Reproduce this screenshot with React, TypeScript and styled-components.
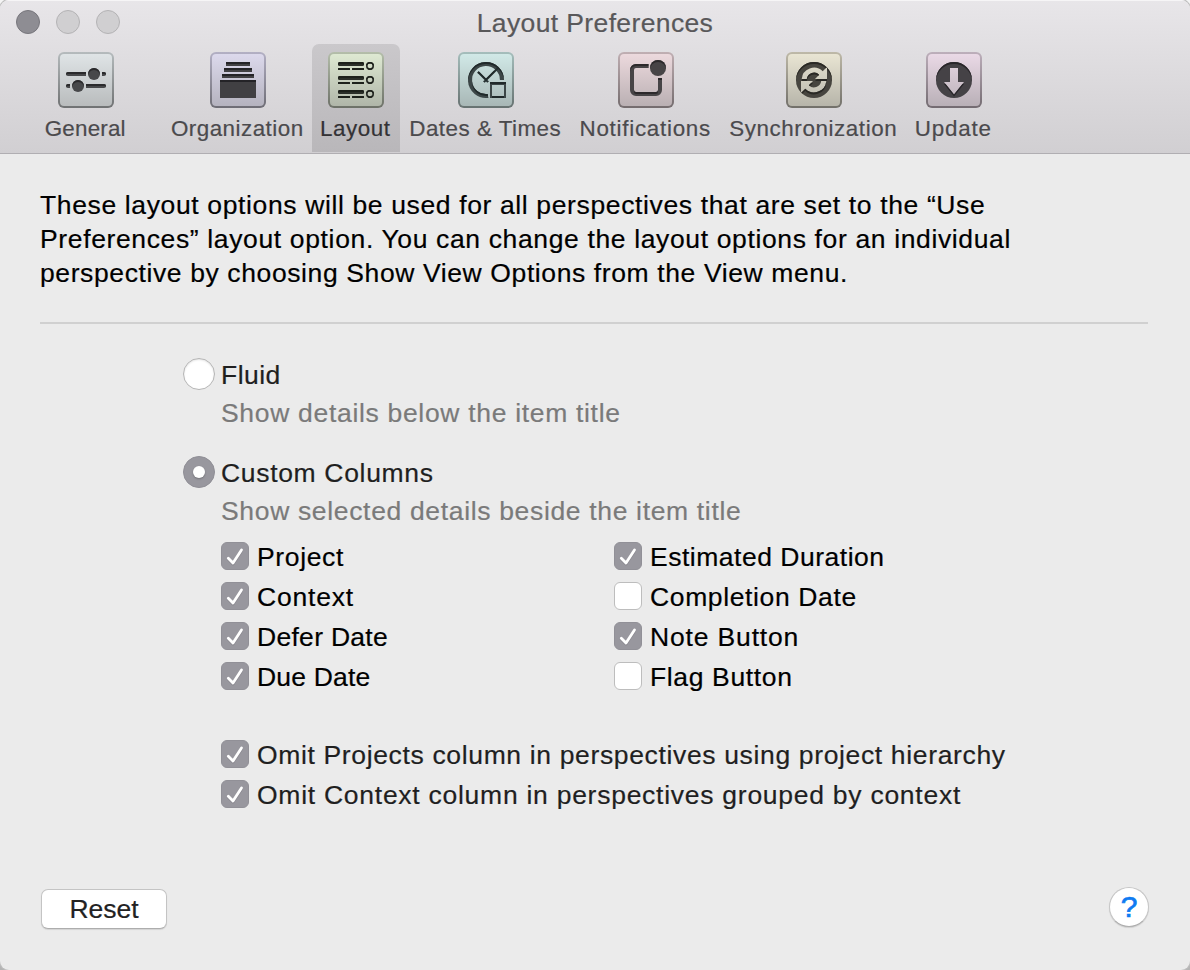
import React from "react";
import styled, { createGlobalStyle } from "styled-components";

const GlobalStyle = createGlobalStyle`
  * { box-sizing: border-box; }
  body {
    margin: 0;
    background: linear-gradient(#f4f4f4 50%, #b4b4b4 50%);
    font-family: "Liberation Sans", Arial, sans-serif;
  }
`;

const Window = styled.div`
  width: 1190px;
  height: 970px;
  display: flex;
  flex-direction: column;
  overflow: hidden;
  border-radius: 9px;
  background: #ebebeb;
  box-shadow: 0 0 0 1px #bdbdbd;
  font-size: 26.5px;
  line-height: 34px;
  color: #000;
  -webkit-text-stroke: 0.2px currentColor;
`;

const Header = styled.header`
  height: 154px;
  flex: none;
  display: flex;
  flex-direction: column;
  background: linear-gradient(#e8e6e9, #d1cfd2);
  border-bottom: 1px solid #b0aeb2;
  box-shadow: inset 0 1px 0 #f6f5f6;
`;

const TitleBar = styled.div`
  height: 44px;
  display: grid;
  grid-template-columns: 1fr auto 1fr;
  padding: 6px 16px 0;
`;

const Lights = styled.div`
  display: flex;
  gap: 16px;
  padding-top: 4px;
`;

const Light = styled.span<{ $dark?: boolean }>`
  width: 24px;
  height: 24px;
  border-radius: 50%;
  background: ${(p) => (p.$dark ? "#8e8d93" : "#d0cfd1")};
  border: 1px solid ${(p) => (p.$dark ? "#77767c" : "#b4b3b5")};
`;

const Title = styled.h1<{ $track: number }>`
  margin: 0;
  font-size: 26.5px;
  font-weight: 400;
  line-height: 34px;
  color: #59585a;
  letter-spacing: ${(p) => p.$track}px;
  white-space: nowrap;
`;

const Toolbar = styled.nav`
  display: flex;
  height: 108px;
  padding-left: 36px;
`;

const Tab = styled.button<{ $width: number; $after?: number; $active?: boolean }>`
  width: ${(p) => p.$width}px;
  height: 108px;
  margin: 0 ${(p) => p.$after ?? 0}px 0 0;
  padding: 8px 0 0;
  border: 0;
  border-radius: 7px 7px 0 0;
  display: flex;
  flex-direction: column;
  align-items: center;
  gap: 8px;
  font: inherit;
  color: ${(p) => (p.$active ? "#333235" : "#4b4a4d")};
  background: ${(p) => (p.$active ? "linear-gradient(#cac8cb, #b9b7ba)" : "transparent")};
`;

const Tile = styled.span<{ $top: string; $bottom: string; $edge: string; $edgeBottom: string }>`
  width: 56px;
  height: 56px;
  flex: none;
  display: block;
  border-radius: 6px;
  border: 2px solid transparent;
  background:
    linear-gradient(${(p) => p.$top}, ${(p) => p.$bottom}) padding-box,
    linear-gradient(${(p) => p.$edge}, ${(p) => p.$edgeBottom}) border-box;

  svg {
    display: block;
    margin: -2px;
  }
`;

const TabLabel = styled.span<{ $track: number }>`
  margin-right: 1.5px;
  font-size: 22.4px;
  line-height: 26px;
  letter-spacing: ${(p) => p.$track}px;
  white-space: nowrap;
`;

const Body = styled.main`
  flex: 1;
  display: flex;
  flex-direction: column;
  padding: 34px 41px 0 40px;
`;

const Intro = styled.p`
  margin: 0 1px 34px 0;
  height: 136px;
  border-bottom: 2px solid #d0d0d0;
`;

const Line = styled.span<{ $track: number; $block?: boolean }>`
  display: ${(p) => (p.$block ? "block" : "inline")};
  letter-spacing: ${(p) => p.$track}px;
  white-space: nowrap;
`;

const Options = styled.div`
  padding-left: 143px;
  display: flex;
  flex-direction: column;
`;

const RadioRow = styled.label`
  display: flex;
  gap: 6px;
  height: 38px;
  color: #1f1f1f;
`;

const Radio = styled.span<{ $on?: boolean }>`
  width: 32px;
  height: 32px;
  border-radius: 50%;
  display: flex;
  align-items: center;
  justify-content: center;
  background: ${(p) => (p.$on ? "#98979e" : "#fff")};
  border: 1px solid ${(p) => (p.$on ? "#908f96" : "#b5b5b5")};
  box-shadow: ${(p) => (p.$on ? "none" : "inset 0 1px 2px #e2e2e2")};
`;

const Dot = styled.span`
  width: 12px;
  height: 12px;
  border-radius: 50%;
  background: #fff;
  box-shadow: 0 1px 2px rgba(0, 0, 0, 0.25);
`;

const Hint = styled.div<{ $after: number }>`
  padding-left: 38px;
  height: 34px;
  margin-bottom: ${(p) => p.$after}px;
  color: #7a7a7a;
`;

const Columns = styled.div`
  display: grid;
  grid-template-columns: 393px auto;
  padding-left: 38px;
  margin-bottom: 44px;
`;

const Stack = styled.div<{ $inset?: boolean }>`
  display: flex;
  flex-direction: column;
  gap: 6px;
  padding-left: ${(p) => (p.$inset ? 38 : 0)}px;
`;

const CheckRow = styled.label<{ $soft?: boolean }>`
  height: 34px;
  display: flex;
  gap: 8px;
  color: ${(p) => (p.$soft ? "#1f1f1f" : "#000")};
`;

const Box = styled.span<{ $on: boolean }>`
  width: 28px;
  height: 28px;
  margin-top: 2px;
  flex: none;
  border-radius: 6px;
  background: ${(p) => (p.$on ? "#98979e" : "#fff")};
  border: 1px solid ${(p) => (p.$on ? "#919097" : "#bdbdbd")};

  svg {
    display: block;
    margin: -1px;
  }
`;

const Footer = styled.footer`
  margin-top: auto;
  height: 83px;
  display: flex;
  justify-content: space-between;
  align-items: flex-start;
`;

const ResetButton = styled.button`
  width: 126px;
  height: 40px;
  margin: 2px 0 0 1px;
  padding: 0 0 1px;
  border: 1px solid #c4c4c4;
  border-bottom-color: #adadad;
  border-radius: 7px;
  background: #fff;
  box-shadow: 0 1px 1px rgba(0, 0, 0, 0.1);
  font: inherit;
  color: #222;
`;

const HelpButton = styled.button`
  width: 40px;
  height: 40px;
  padding: 0;
  border: 1px solid #c6c6c6;
  border-bottom-color: #adadad;
  border-radius: 50%;
  background: #fff;
  box-shadow: 0 1px 1px rgba(0, 0, 0, 0.12);
  font: inherit;
  font-size: 30px;
  line-height: 38px;
  color: #0f7bf2;
  -webkit-text-stroke: 0.7px currentColor;
`;

function Glyph({ id, top, low, children }: { id: string; top: string; low: string; children: React.ReactNode }) {
  return (
    <svg width="56" height="56" viewBox="0 0 56 56" fill={low} stroke="none">
      <defs>
        <filter id={id} x="-10%" y="-10%" width="120%" height="120%" colorInterpolationFilters="sRGB">
          <feOffset in="SourceAlpha" dy="2" result="moved" />
          <feComposite in="SourceAlpha" in2="moved" operator="out" result="rim" />
          <feFlood floodColor={top} />
          <feComposite in2="rim" operator="in" result="shade" />
          <feMerge>
            <feMergeNode in="SourceGraphic" />
            <feMergeNode in="shade" />
          </feMerge>
        </filter>
      </defs>
      <g filter={`url(#${id})`}>{children}</g>
    </svg>
  );
}

const GeneralIcon = () => (
  <Glyph id="g1" top="#2a2a2c" low="#47484a">
    <path d="M10 20h18v4H10a2 2 0 0 1 0-4zM44 20h2a2 2 0 0 1 0 4h-2zM10 32h2v4h-2a2 2 0 0 1 0-4zM28 32h18a2 2 0 0 1 0 4H28z" />
    <circle cx="36" cy="22" r="6" />
    <circle cx="20" cy="34" r="6" />
  </Glyph>
);

const OrganizationIcon = () => (
  <Glyph id="g2" top="#242327" low="#414043">
    <path d="M16 10h24v4H16zM14 16h28v4H14zM12 22h32v4H12zM10 28h36v18H10z" />
  </Glyph>
);

const LayoutIcon = () => (
  <Glyph id="g3" top="#1d211b" low="#2b2f29">
    {[10, 24, 38].map((y) => (
      <g key={y}>
        <rect x="10" y={y} width="26" height="4" rx="1.5" />
        <rect x="10" y={y + 6} width="12" height="2" rx="0.5" />
        <rect x="24" y={y + 6} width="12" height="2" rx="0.5" />
        <circle cx="42" cy={y + 4} r="3.2" fill="none" stroke="#2b2f29" strokeWidth="1.6" />
      </g>
    ))}
  </Glyph>
);

const DatesIcon = () => (
  <Glyph id="g4" top="#20292a" low="#3c4647">
    <path d="M44 28A16 16 0 1 0 30 43.9" fill="none" stroke="#3c4647" strokeWidth="4" />
    <path d="M20 20l10 10M26 30L40 16" fill="none" stroke="#253031" strokeWidth="2" />
    <path d="M32 30h16v16H32zm2 3v11h12V33z" fillRule="evenodd" />
  </Glyph>
);

const NotificationsIcon = () => (
  <Glyph id="g5" top="#2c292b" low="#474446">
    <path
      d="M30.500 14H18a4 4 0 0 0-4 4v20a4 4 0 0 0 4 4h20a4 4 0 0 0 4-4V26"
      fill="none"
      stroke="#474446"
      strokeWidth="4"
    />
    <circle cx="40" cy="16" r="8" />
  </Glyph>
);

const SyncIcon = () => (
  <Glyph id="g6" top="#2a2925" low="#47453f">
    <path
      fillRule="evenodd"
      d="M28 10a18 18 0 1 1 0 36a18 18 0 1 1 0-36zM15.700 27A12.300 12.300 0 0 1 36.700 19.300L41 15V27H29L33.200 22.800A7.300 7.300 0 0 0 20.800 27zM40.300 29A12.300 12.300 0 0 1 19.300 36.700L15 41V29H27L22.800 33.200A7.300 7.300 0 0 0 35.200 29z"
    />
  </Glyph>
);

const UpdateIcon = () => (
  <Glyph id="g7" top="#29262a" low="#454246">
    <path fillRule="evenodd" d="M28 10a18 18 0 1 1 0 36a18 18 0 1 1 0-36zM24 16v14h-6l10 12.500L38 30h-6V16z" />
  </Glyph>
);

const Check = () => (
  <svg width="28" height="28" viewBox="0 0 28 28" fill="none" strokeLinecap="round" strokeLinejoin="round">
    <path d="M7.300 17.200L12 22L20.500 9" stroke="#77767d" strokeOpacity="0.5" strokeWidth="3" />
    <path d="M7.300 16.200L12 21L20.500 8" stroke="#fff" strokeWidth="2.8" />
  </svg>
);

const tabs = [
  { label: "General", track: 0.2, width: 100, after: 28, colors: ["#dfe4e6", "#b9bcbd", "#b5bbbd", "#707273"], Icon: GeneralIcon },
  { label: "Organization", track: 0.48, width: 148, colors: ["#dcd9ec", "#b5b3bf", "#b3b0c4", "#6e6d75"], Icon: OrganizationIcon },
  { label: "Layout", track: 0.55, width: 88, active: true, colors: ["#dee9d2", "#b0b6a9", "#b4beaa", "#6d7168"], Icon: LayoutIcon },
  { label: "Dates & Times", track: 0.49, width: 172, colors: ["#d1e9e7", "#a8b7b6", "#a5bebc", "#677271"], Icon: DatesIcon },
  { label: "Notifications", track: 0.73, width: 148, colors: ["#ecd9dd", "#bab0b3", "#c0afb3", "#746c6e"], Icon: NotificationsIcon },
  { label: "Synchronization", track: 0.58, width: 188, colors: ["#e9e5d3", "#b7b5aa", "#beb9a8", "#72706a"], Icon: SyncIcon },
  { label: "Update", track: 0.8, width: 92, colors: ["#ead9e6", "#b9b0b7", "#bdafbb", "#736b71"], Icon: UpdateIcon },
];

const intro = [
  { text: "These layout options will be used for all perspectives that are set to the “Use", track: 0.63 },
  { text: "Preferences” layout option. You can change the layout options for an individual", track: 0.636 },
  { text: "perspective by choosing Show View Options from the View menu.", track: 0.608 },
];

const columns = [
  [
    { text: "Project", track: 0.65, on: true },
    { text: "Context", track: 0.8, on: true },
    { text: "Defer Date", track: 0.29, on: true },
    { text: "Due Date", track: 0.2, on: true },
  ],
  [
    { text: "Estimated Duration", track: 0.51, on: true },
    { text: "Completion Date", track: 0.63, on: false },
    { text: "Note Button", track: 0.84, on: true },
    { text: "Flag Button", track: 0.64, on: false },
  ],
];

const omissions = [
  { text: "Omit Projects column in perspectives using project hierarchy", track: 0.646, on: true },
  { text: "Omit Context column in perspectives grouped by context", track: 0.735, on: true },
];

function CheckOption({ text, track, on, soft }: { text: string; track: number; on: boolean; soft?: boolean }) {
  return (
    <CheckRow $soft={soft}>
      <Box $on={on}>{on && <Check />}</Box>
      <Line $track={track}>{text}</Line>
    </CheckRow>
  );
}

export default function App() {
  return (
    <>
      <GlobalStyle />
      <Window>
        <Header>
          <TitleBar>
            <Lights>
              <Light $dark />
              <Light />
              <Light />
            </Lights>
            <Title $track={0.37}>Layout Preferences</Title>
          </TitleBar>
          <Toolbar>
            {tabs.map(({ label, track, width, after, active, colors, Icon }) => (
              <Tab key={label} $width={width} $after={after} $active={active}>
                <Tile $top={colors[0]} $bottom={colors[1]} $edge={colors[2]} $edgeBottom={colors[3]}>
                  <Icon />
                </Tile>
                <TabLabel $track={track}>{label}</TabLabel>
              </Tab>
            ))}
          </Toolbar>
        </Header>
        <Body>
          <Intro>
            {intro.map((l) => (
              <Line key={l.text} $track={l.track} $block>
                {l.text}
              </Line>
            ))}
          </Intro>
          <Options>
            <RadioRow>
              <Radio />
              <Line $track={0.45}>Fluid</Line>
            </RadioRow>
            <Hint $after={26}>
              <Line $track={0.684}>Show details below the item title</Line>
            </Hint>
            <RadioRow>
              <Radio $on>
                <Dot />
              </Radio>
              <Line $track={0.67}>Custom Columns</Line>
            </RadioRow>
            <Hint $after={12}>
              <Line $track={0.66}>Show selected details beside the item title</Line>
            </Hint>
            <Columns>
              {columns.map((items, i) => (
                <Stack key={i}>
                  {items.map((o) => (
                    <CheckOption key={o.text} {...o} />
                  ))}
                </Stack>
              ))}
            </Columns>
            <Stack $inset>
              {omissions.map((o) => (
                <CheckOption key={o.text} {...o} soft />
              ))}
            </Stack>
          </Options>
          <Footer>
            <ResetButton>
              <Line $track={0}>Reset</Line>
            </ResetButton>
            <HelpButton>?</HelpButton>
          </Footer>
        </Body>
      </Window>
    </>
  );
}
